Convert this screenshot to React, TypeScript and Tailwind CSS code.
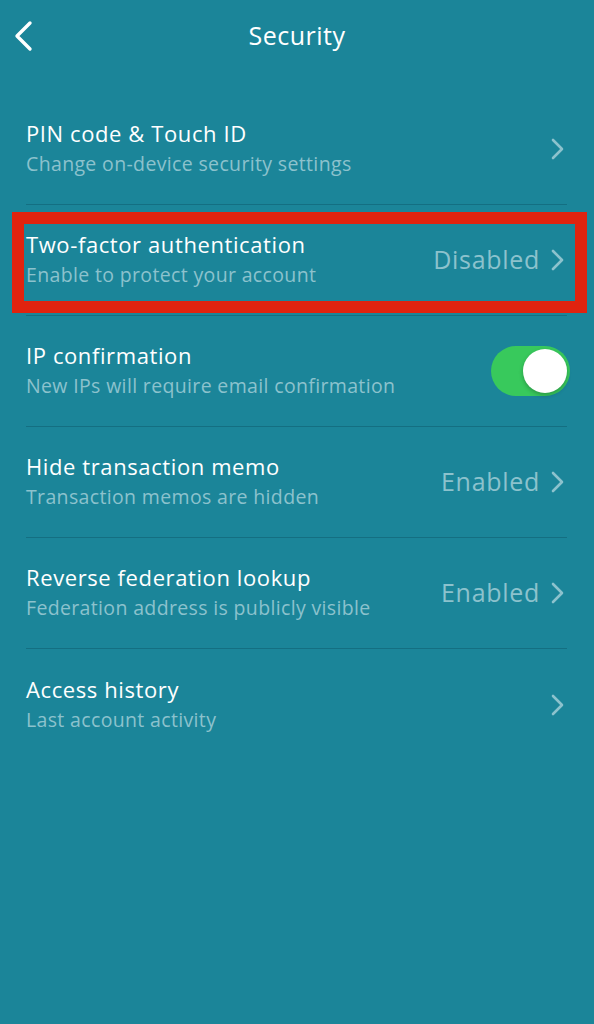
import React from "react";

const Chevron = () => (
  <svg width="16" height="24" viewBox="0 0 16 24" className="shrink-0">
    <path d="M4 3 L13 12 L4 21" fill="none" stroke="#8cc2cd" strokeWidth="2.6" strokeLinecap="round" strokeLinejoin="round" />
  </svg>
);

type Row = { title: string; sub: string; value?: string; toggle?: boolean };

const rows: Row[] = [
  { title: "PIN code & Touch ID", sub: "Change on-device security settings" },
  { title: "Two-factor authentication", sub: "Enable to protect your account", value: "Disabled" },
  { title: "IP confirmation", sub: "New IPs will require email confirmation", toggle: true },
  { title: "Hide transaction memo", sub: "Transaction memos are hidden", value: "Enabled" },
  { title: "Reverse federation lookup", sub: "Federation address is publicly visible", value: "Enabled" },
  { title: "Access history", sub: "Last account activity" },
];

export default function App() {
  return (
    <div
      className="relative w-[594px] h-[1024px] bg-[#1b8599] overflow-hidden"
      style={{ fontFamily: "'Open Sans', 'Noto Sans', sans-serif" }}
    >
      <div className="relative h-[94px] flex items-start justify-center pt-[19px]">
        <svg width="24" height="34" viewBox="0 0 24 34" className="absolute left-[11px] top-[19px]">
          <path d="M19 4 L6 17 L19 30" fill="none" stroke="#ffffff" strokeWidth="3.4" strokeLinecap="round" strokeLinejoin="round" />
        </svg>
        <div className="text-white text-[25px] leading-[32px] tracking-[0.5px]">Security</div>
      </div>
      <div className="flex flex-col">
        {rows.map((r, i) => (
          <div key={i} className="pl-[26px] pr-[27px]">
            <div
              className={`h-[111px] flex items-center justify-between ${
                i < rows.length - 1 ? "border-b border-[#146f82]" : ""
              }`}
            >
              <div className="flex flex-col">
                <div className="text-white text-[22px] leading-[30px] tracking-[0.6px]">{r.title}</div>
                <div className="text-[#8cc2cd] text-[19.5px] leading-[32px] tracking-[0.35px]">{r.sub}</div>
              </div>
              {r.toggle ? (
                <div className="mr-[-3px] w-[79px] h-[50px] rounded-full bg-[#38c95c] flex items-center justify-end pr-[3px]">
                  <div className="w-[44px] h-[44px] rounded-full bg-white shadow-[0_2px_4px_rgba(0,0,0,0.25)]" />
                </div>
              ) : (
                <div className="flex items-center gap-[9px] pr-[2px]">
                  {r.value && <span className="text-[#8cc2cd] text-[25px] tracking-[0.7px]">{r.value}</span>}
                  <Chevron />
                </div>
              )}
            </div>
          </div>
        ))}
      </div>
      <div className="absolute left-[12px] top-[212px] w-[575px] h-[101px] border-[12px] border-[#e0230f]" />
    </div>
  );
}
